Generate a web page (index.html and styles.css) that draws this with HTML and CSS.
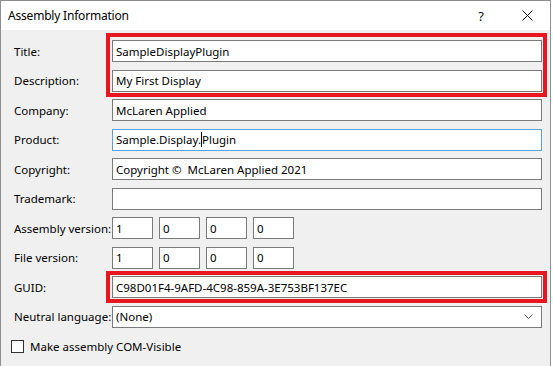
FILE: index.html
```html
<!DOCTYPE html>
<html lang="en">
<head>
    <meta charset="UTF-8">
    <title>Assembly Information</title>
    <link rel="stylesheet" href="styles.css">
</head>
<body>
    <div class="window">
        <!-- Title bar -->
        <div class="titlebar">
            <span class="title">Assembly Information</span>
            <div class="controls">
                <span class="ctrl">?</span>
                <span class="ctrl">
                    <svg width="11" height="11" viewBox="0 0 11 11"><path d="M0.5 0.5 L10.5 10.5 M10.5 0.5 L0.5 10.5" stroke="#111" stroke-width="1" fill="none"/></svg>
                </span>
            </div>
        </div>

        <!-- Dialog body -->
        <div class="dialog">
            <div class="form">
                <span class="label">Title:</span>
                <div class="field">SampleDisplayPlugin</div>

                <span class="label">Description:</span>
                <div class="field">My First Display</div>

                <span class="label">Company:</span>
                <div class="field">McLaren Applied</div>

                <span class="label">Product:</span>
                <div class="field focused">Sample.Display.<span class="caret"></span>Plugin</div>

                <span class="label">Copyright:</span>
                <div class="field">Copyright ©&nbsp; McLaren Applied 2021</div>

                <span class="label">Trademark:</span>
                <div class="field"></div>

                <span class="label">Assembly version:</span>
                <div class="version">
                    <div class="field">1</div>
                    <div class="field">0</div>
                    <div class="field">0</div>
                    <div class="field">0</div>
                </div>

                <span class="label">File version:</span>
                <div class="version">
                    <div class="field">1</div>
                    <div class="field">0</div>
                    <div class="field">0</div>
                    <div class="field">0</div>
                </div>

                <span class="label">GUID:</span>
                <div class="field">C98D01F4-9AFD-4C98-859A-3E753BF137EC</div>

                <span class="label">Neutral language:</span>
                <div class="field combo">
                    <span>(None)</span>
                    <svg width="9" height="5" viewBox="0 0 9 5"><path d="M0.5 0.5 L4.5 4.5 L8.5 0.5" stroke="#555" stroke-width="1" fill="none"/></svg>
                </div>
            </div>

            <div class="check">
                <span class="box"></span>
                <span>Make assembly COM-Visible</span>
            </div>

            <!-- highlight annotations -->
            <div class="mark mark-top"></div>
            <div class="mark mark-guid"></div>
        </div>
    </div>
</body>
</html>
```

FILE: styles.css
```css
/* General */
body {
    margin: 0;
    background-color: #ffffff;
    font-family: 'Noto Sans', 'Open Sans', sans-serif;
    font-size: 11.5px;
    color: #000;
}

.window {
    width: 551px;
    height: 366px;
    box-sizing: border-box;
    border: 1px solid #8e8e8e;
    border-bottom: none;
    background-color: #f0f0f0;
    overflow: hidden;
}

/* Title bar */
.titlebar {
    height: 29px;
    background-color: #ffffff;
    display: flex;
    align-items: center;
    justify-content: space-between;
}

.title {
    padding-left: 7px;
    font-size: 12px;
    letter-spacing: -0.2px;
    color: #000;
}

.controls {
    display: flex;
    height: 100%;
}

.ctrl {
    width: 46px;
    display: flex;
    align-items: center;
    justify-content: center;
    font-size: 13px;
    color: #111;
}

/* Body */
.dialog {
    position: relative;
    padding: 10px 8px 0 13px;
}

.form {
    display: grid;
    grid-template-columns: 98px 1fr;
    row-gap: 7.5px;
    align-items: center;
}

.label {
    white-space: nowrap;
}

.field {
    height: 22px;
    box-sizing: border-box;
    border: 1px solid #7a7a7a;
    background-color: #ffffff;
    padding: 0 3px;
    display: flex;
    align-items: center;
    white-space: pre;
}

.field.focused {
    border-color: #5aa2e0;
}

.caret {
    display: inline-block;
    width: 1px;
    height: 15px;
    background-color: #000;
}

.version {
    display: flex;
    gap: 6px;
}

.version .field {
    width: 41px;
}

.combo {
    justify-content: space-between;
    padding-right: 8px;
}

/* Checkbox */
.check {
    display: flex;
    align-items: center;
    gap: 6px;
    margin: 11px 0 0 -3px;
}

.check .box {
    width: 13px;
    height: 13px;
    box-sizing: border-box;
    border: 1px solid #333;
    background-color: #ffffff;
}

/* Red highlight annotations */
.mark {
    position: absolute;
    left: 105px;
    width: 441px;
    box-sizing: border-box;
    border: 4px solid #e8161f;
}

.mark-top {
    top: 3px;
    height: 64px;
}

.mark-guid {
    top: 241px;
    height: 32px;
}
```
